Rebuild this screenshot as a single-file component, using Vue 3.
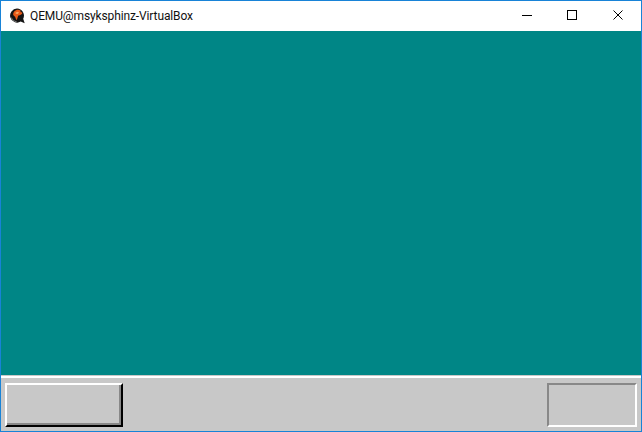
<script setup>
const controls = ['min', 'max', 'close']
</script>

<template>
  <div class="window">
    <header class="titlebar">
      <svg class="logo" viewBox="0 0 16 16" width="16" height="16" aria-hidden="true">
        <path d="M8 .6a7 7 0 0 1 6.2 10.2l1.5 4.4-4-1.6A7 7 0 1 1 8 .6z" fill="#141414" />
        <path d="M4.2 7.5C3.8 5 5 3 7 2.2c1.8-.7 3.6-.3 5 .8l-1 1 2.4.4-.5 1.6-2 1.2-1.6.4-.7 2-.9 2.6-1-1.6-.5-1.7-2-1.9z" fill="#ea5a18" />
        <path d="M6.5 4.4 9 3.7l1 1.1-1.4 1.2-1.9-.2z" fill="#f9a662" />
        <path d="M2.4 9.6c.8 2.2 2.8 3.8 5.2 4.1" fill="none" stroke="#8a8a8a" stroke-width=".9" />
      </svg>
      <span class="title">QEMU@msyksphinz-VirtualBox</span>
      <div class="controls">
        <div v-for="c in controls" :key="c" class="control" :class="c">
          <svg viewBox="0 0 10 10" width="10" height="10" aria-hidden="true" shape-rendering="crispEdges">
            <rect v-if="c === 'min'" x="0" y="5" width="10" height="1" fill="#000" />
            <rect v-else-if="c === 'max'" x=".5" y=".5" width="9" height="9" fill="none" stroke="#000" />
            <path v-else d="M.5.5l9 9M9.5.5l-9 9" fill="none" stroke="#000" shape-rendering="auto" />
          </svg>
        </div>
      </div>
    </header>
    <main class="desktop"></main>
    <footer class="taskbar">
      <div class="start"></div>
      <div class="tray"></div>
    </footer>
  </div>
</template>

<style>
html, body { margin: 0; padding: 0; }
</style>

<style scoped>
.window {
  box-sizing: border-box;
  width: 642px;
  height: 432px;
  border: 1px solid #1883d7;
  display: flex;
  flex-direction: column;
  background: #c8c8c8;
}
.titlebar {
  height: 30px;
  flex: none;
  background: #fff;
  display: flex;
  align-items: center;
  padding-left: 8px;
}
.logo { flex: none; }
.title {
  margin-left: 5px;
  font: 12px Roboto, sans-serif;
  letter-spacing: -0.12px;
  color: #111;
  white-space: nowrap;
}
.controls { margin-left: auto; display: flex; height: 100%; }
.control {
  box-sizing: border-box;
  width: 46px;
  padding-bottom: 2px;
  display: flex;
  align-items: center;
  justify-content: center;
}
.control.min { padding-left: 2px; }
.desktop { flex: 1; background: #008686; }
.taskbar {
  box-sizing: border-box;
  height: 56px;
  flex: none;
  background: #c8c8c8;
  box-shadow: inset 0 1px 0 #c8c8c8, inset 0 3px 0 #fff;
  display: flex;
  justify-content: space-between;
  padding: 8px 4px 4px;
}
.start {
  box-sizing: border-box;
  width: 118px;
  border: 2px solid;
  border-color: #fff #000 #000 #fff;
  box-shadow: inset -2px -2px 0 #888;
}
.tray {
  box-sizing: border-box;
  width: 90px;
  border: 2px solid;
  border-color: #888 #fff #fff #888;
}
</style>
